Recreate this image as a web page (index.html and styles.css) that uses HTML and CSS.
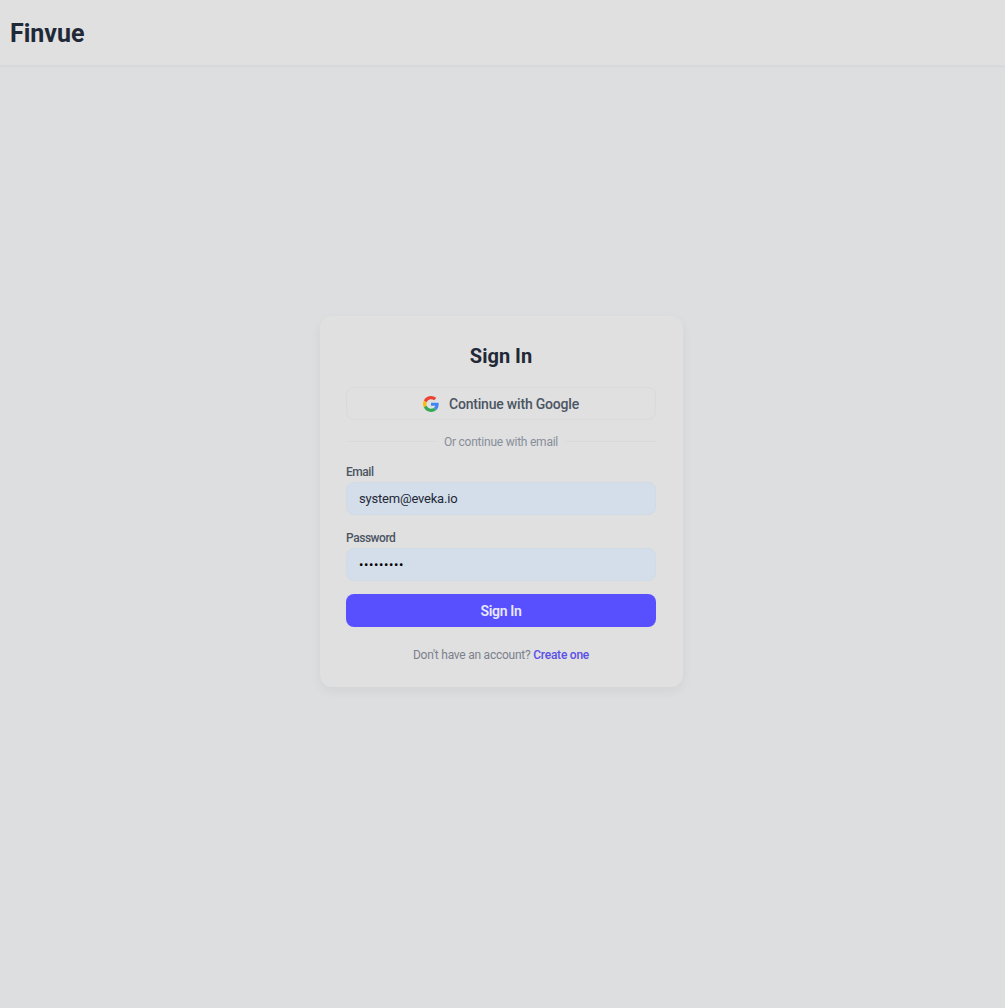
FILE: index.html
```html
<!DOCTYPE html>
<html lang="en">
<head>
<meta charset="utf-8">
<title>Finvue - Sign In</title>
<link rel="stylesheet" href="styles.css">
</head>
<body>
<header class="topbar"><span class="brand">Finvue</span></header>
<main class="stage">
  <section class="card">
    <h1 class="title">Sign In</h1>
    <button class="google" type="button">
      <svg class="g-icon" viewBox="0 0 48 48" width="16" height="16" aria-hidden="true">
        <path fill="#EA4335" d="M24 9.5c3.54 0 6.71 1.22 9.21 3.6l6.85-6.85C35.9 2.38 30.47 0 24 0 14.62 0 6.51 5.38 2.56 13.22l7.98 6.19C12.43 13.72 17.74 9.5 24 9.5z"/>
        <path fill="#4285F4" d="M46.98 24.55c0-1.57-.15-3.09-.38-4.55H24v9.02h12.94c-.58 2.96-2.26 5.48-4.78 7.18l7.73 6c4.51-4.18 7.09-10.36 7.09-17.65z"/>
        <path fill="#FBBC05" d="M10.53 28.59c-.48-1.45-.76-2.99-.76-4.59s.27-3.14.76-4.59l-7.98-6.19C.92 16.46 0 20.12 0 24c0 3.88.92 7.54 2.56 10.78l7.97-6.19z"/>
        <path fill="#34A853" d="M24 48c6.48 0 11.93-2.13 15.89-5.81l-7.73-6c-2.15 1.45-4.92 2.3-8.16 2.3-6.26 0-11.57-4.22-13.47-9.91l-7.98 6.19C6.51 42.62 14.62 48 24 48z"/>
      </svg>
      <span>Continue with Google</span>
    </button>
    <div class="divider"><span class="divider-text">Or continue with email</span></div>
    <form class="form">
      <div class="field">
        <label class="label" for="email">Email</label>
        <input class="input" id="email" type="email" value="system@eveka.io">
      </div>
      <div class="field">
        <label class="label" for="password">Password</label>
        <input class="input input-secret" id="password" type="password" value="password1">
      </div>
      <button class="submit" type="button">Sign In</button>
    </form>
    <p class="foot">Don't have an account? <a class="link" href="#">Create one</a></p>
  </section>
</main>
</body>
</html>
```
FILE: styles.css
```css
* { box-sizing: border-box; }
html, body { height: 100%; }
body {
  margin: 0;
  display: flex;
  flex-direction: column;
  background: #dddee0;
  font-family: Roboto, "Noto Sans", sans-serif;
  color: #1f2937;
}
.topbar {
  height: 66px;
  flex: none;
  display: flex;
  align-items: center;
  padding: 1px 10px 0;
  background: #e0e0e0;
  border-bottom: 1px solid #d8d9db;
  box-shadow: 0 1px 2px rgba(0,0,0,.03);
}
.brand { font-size: 25px; font-weight: 700; color: #1f2937; }
.stage {
  flex: 1;
  display: flex;
  justify-content: center;
  padding-top: 250px;
  padding-right: 2px;
}
.card {
  width: 363px;
  height: 371px;
  padding: 26px 27px 26px 26px;
  background: #e0e0e0;
  border-radius: 12px;
  box-shadow: 0 4px 12px rgba(0,0,0,.05);
}
.title {
  margin: 0 0 17px;
  font-size: 20px;
  line-height: 28px;
  font-weight: 700;
  text-align: center;
  color: #1f2937;
}
.google {
  width: 100%;
  height: 33px;
  display: flex;
  align-items: center;
  justify-content: center;
  gap: 10px;
  padding: 1px 0 0;
  background: transparent;
  border: 1px solid #d9dadc;
  border-radius: 8px;
  font: 500 14px Roboto, sans-serif;
  letter-spacing: -0.2px;
  color: #4b5563;
}
.divider {
  display: flex;
  align-items: center;
  gap: 7px;
  margin: 11px 0 12px;
  height: 20px;
  font-size: 12px;
  letter-spacing: -0.23px;
  color: #878e9a;
}
.divider-text { padding-top: 2px; }
.divider::before, .divider::after {
  content: "";
  flex: 1;
  height: 1px;
  background: #d9dadc;
}
.field { margin-bottom: 13px; }
.field + .field { margin-top: 14px; }
.label {
  display: block;
  font-size: 12px;
  line-height: 18px;
  padding-bottom: 1px;
  font-weight: 500;
  letter-spacing: -0.45px;
  color: #4b5563;
}
.input {
  display: block;
  width: 100%;
  height: 33px;
  padding: 0 12px;
  background: #d3deea;
  border: 1px solid #d0dbe6;
  border-radius: 8px;
  font: 400 13px Roboto, sans-serif;
  letter-spacing: -0.2px;
  color: #1f2937;
  outline: none;
}
.input-secret { color: #000; letter-spacing: 0.6px; }
.submit {
  display: block;
  width: 100%;
  height: 33px;
  background: #5850ff;
  border: 0;
  border-radius: 8px;
  font: 600 14px Roboto, sans-serif;
  letter-spacing: -0.3px;
  color: #e8e8ff;
}
.foot {
  margin: 19px 0 0;
  font-size: 12px;
  line-height: 18px;
  letter-spacing: -0.24px;
  text-align: center;
  color: #7b818c;
}
.link { color: #5850e8; font-weight: 500; text-decoration: none; }
```
